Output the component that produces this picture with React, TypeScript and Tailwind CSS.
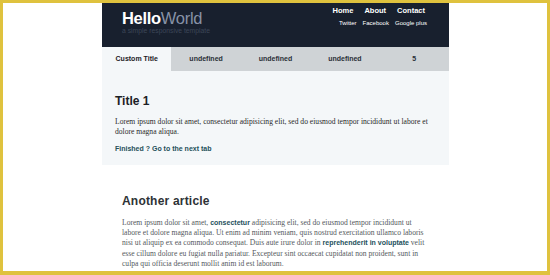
import React from "react";

const serif = { fontFamily: '"Liberation Serif", "DejaVu Serif", serif' };
const sans = { fontFamily: '"Liberation Sans", Arial, sans-serif' };

export default function App() {
  return (
    <div className="w-[550px] h-[275px] overflow-hidden bg-white border-[#dfc23e] border-t-[3px] border-l-[3px] border-r-[3px] border-b-[4px] box-border" style={sans}>
      <div className="w-[347px] ml-[99px]">
        {/* Header */}
        <div className="h-[44px] bg-[#18202e] flex justify-between">
          <div className="pl-[20px] pt-[6px]">
            <div className="text-[16.5px] leading-[19px] tracking-[-0.3px]">
              <span className="font-bold text-white">Hello</span>
              <span className="text-[#8792a6]">World</span>
            </div>
            <div className="text-[6.8px] leading-[8px] text-[#3c4658] -mt-[1px]">a simple responsive template</div>
          </div>
          <div className="pr-[24px] pt-[3px] flex flex-col items-end">
            <div className="flex gap-[11px] text-[7.5px] leading-[9px] font-bold text-white">
              <span>Home</span>
              <span>About</span>
              <span>Contact</span>
            </div>
            <div className="flex gap-[6px] text-[6px] leading-[7px] text-white mt-[5px] -mr-[2px]">
              <span>Twitter</span>
              <span>Facebook</span>
              <span>Google plus</span>
            </div>
          </div>
        </div>
        {/* Tabs */}
        <div className="grid grid-cols-5 h-[24px] bg-[#cfd3d6] text-[7px] font-bold text-[#2a2f36]">
          <div className="bg-[#f4f7f9] flex items-center justify-center text-[#1c2026]">Custom Title</div>
          <div className="flex items-center justify-center">undefined</div>
          <div className="flex items-center justify-center">undefined</div>
          <div className="flex items-center justify-center">undefined</div>
          <div className="flex items-center justify-center">5</div>
        </div>
        {/* Panel */}
        <div className="bg-[#f4f7f9] h-[94px] pl-[13px] pt-[23px]">
          <div className="text-[12px] leading-[14px] font-bold text-[#1c2026]">Title 1</div>
          <p className="text-[7.6px] leading-[10px] text-[#2a2a2a] mt-[9px] w-[320px]" style={serif}>
            Lorem ipsum dolor sit amet, consectetur adipisicing elit, sed do eiusmod tempor incididunt ut labore et
            <br />
            dolore magna aliqua.
          </p>
          <div className="text-[7px] leading-[9px] font-bold text-[#25505a] mt-[7px]">Finished ? Go to the next tab</div>
        </div>
        {/* Article */}
        <div className="pl-[20px] pt-[29px]">
          <div className="text-[12px] leading-[14px] font-bold text-[#2e3236] tracking-[0.2px]">Another article</div>
          <p className="text-[7.6px] leading-[10.35px] text-[#555a60] mt-[9.5px] whitespace-nowrap" style={serif}>
            Lorem ipsum dolor sit amet, <span className="font-bold text-[#24505c] text-[7px]" style={sans}>consectetur</span> adipisicing elit, sed do eiusmod tempor incididunt ut
            <br />
            labore et dolore magna aliqua. Ut enim ad minim veniam, quis nostrud exercitation ullamco laboris
            <br />
            nisi ut aliquip ex ea commodo consequat. Duis aute irure dolor in <span className="font-bold text-[#24505c] text-[7px]" style={sans}>reprehenderit in voluptate</span> velit
            <br />
            esse cillum dolore eu fugiat nulla pariatur. Excepteur sint occaecat cupidatat non proident, sunt in
            <br />
            culpa qui officia deserunt mollit anim id est laborum.
          </p>
        </div>
      </div>
    </div>
  );
}
